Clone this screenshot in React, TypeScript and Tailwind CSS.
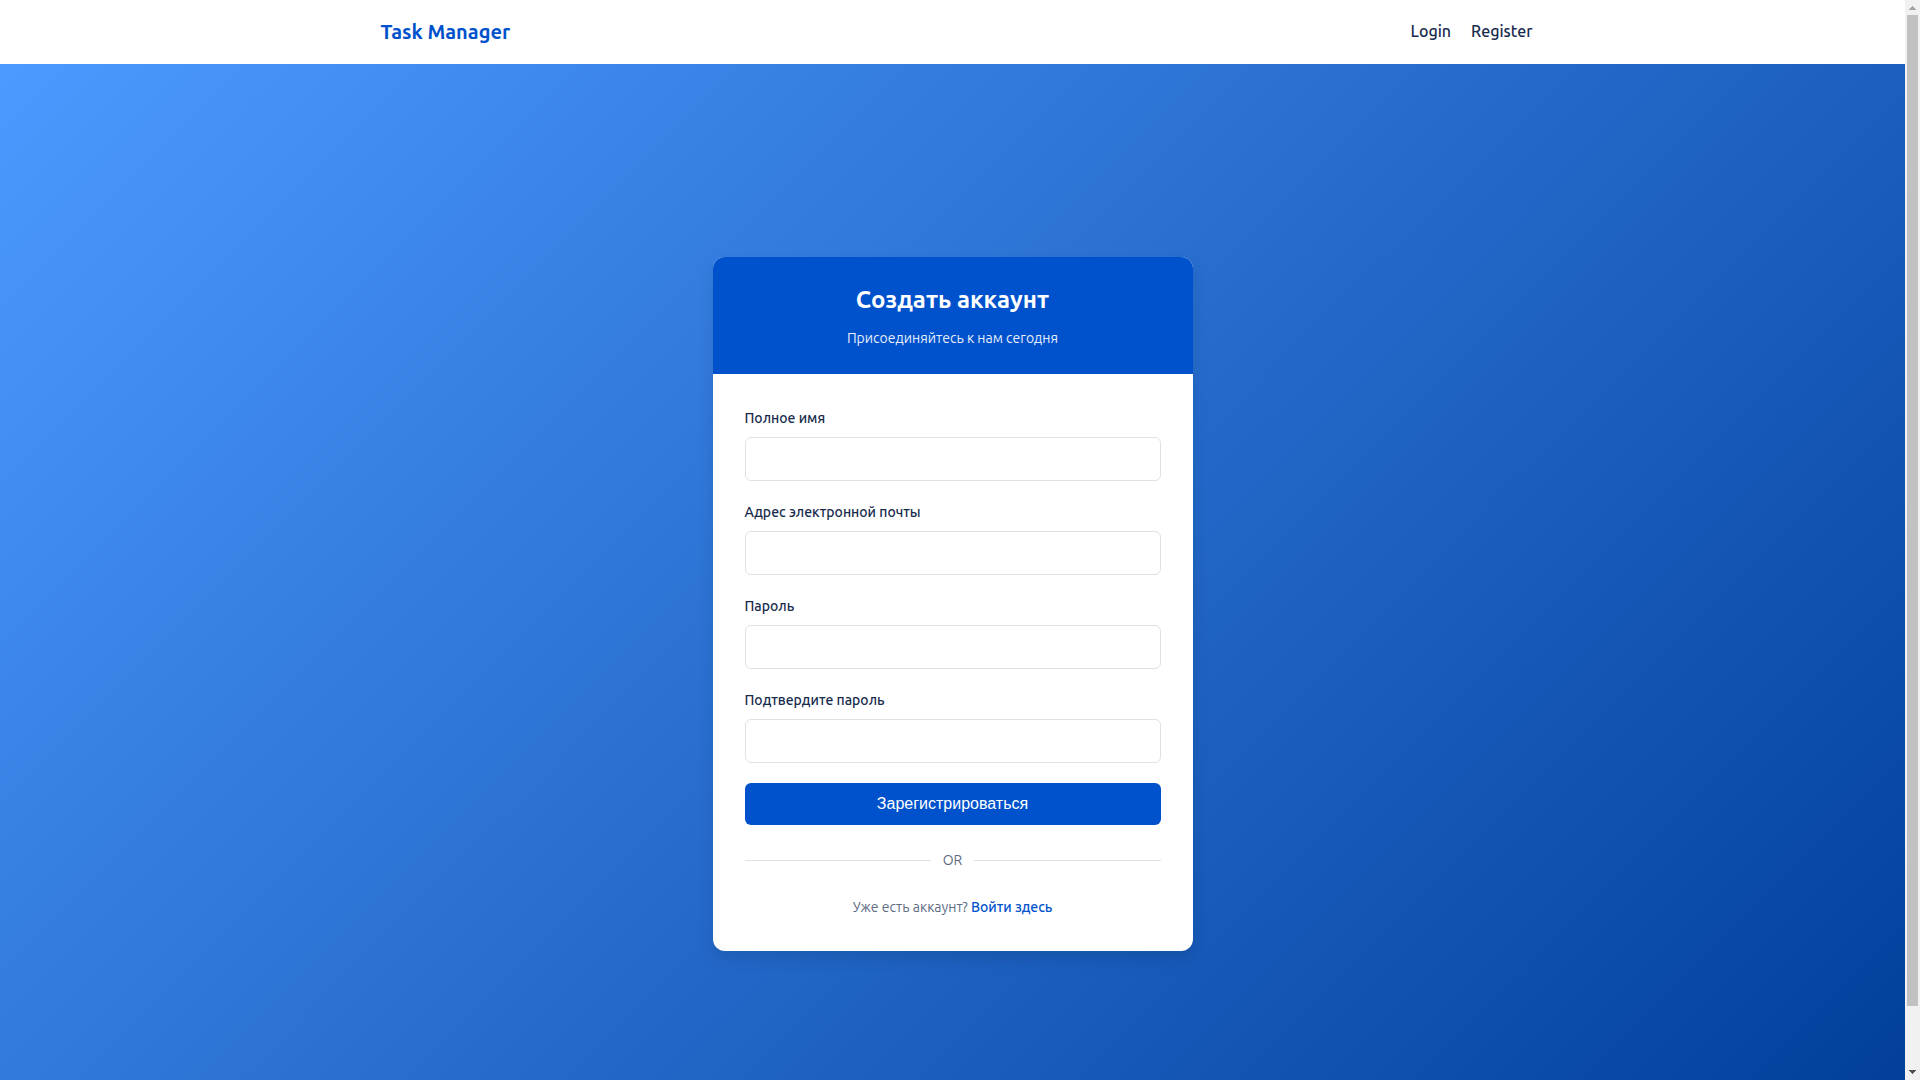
import React from "react";

const fields = [
  { id: "name", label: "Полное имя", type: "text" },
  { id: "email", label: "Адрес электронной почты", type: "email" },
  { id: "password", label: "Пароль", type: "password" },
  { id: "confirm", label: "Подтвердите пароль", type: "password" },
];

function Header() {
  return (
    <header className="h-16 shrink-0 bg-white">
      <div className="mx-auto flex h-full max-w-[1200px] items-center justify-between pr-5 pl-7">
        <a href="#" className="text-xl leading-8 font-bold text-[#0052cc]">
          Task Manager
        </a>
        <nav className="flex gap-5 pb-0.5 text-base leading-6 font-medium text-[#172b4d]">
          <a href="#login">Login</a>
          <a href="#register">Register</a>
        </nav>
      </div>
    </header>
  );
}

function RegisterCard() {
  return (
    <section className="w-full max-w-[480px] overflow-hidden rounded-xl bg-white shadow-[0_8px_16px_rgba(0,0,0,0.1)]">
      <div className="bg-[#0052cc] p-6 text-center text-white">
        <h1 className="mb-2 text-2xl leading-[38px] font-bold">Создать аккаунт</h1>
        <p className="text-sm leading-[23px] opacity-90">Присоединяйтесь к нам сегодня</p>
      </div>
      <div className="p-8">
        <form className="flex flex-col gap-5 pt-px">
          {fields.map((f) => (
            <div key={f.id} className="flex flex-col gap-2">
              <label htmlFor={f.id} className="text-sm leading-[22px] font-medium text-[#172b4d]">
                {f.label}
              </label>
              <input
                id={f.id}
                type={f.type}
                className="h-11 w-full rounded-md border border-[#dfe1e6] px-4 outline-none focus:border-[#0052cc]"
              />
            </div>
          ))}
          <button
            type="button"
            className="h-[42px] w-full rounded-md bg-[#0052cc] font-['Liberation_Sans',sans-serif] text-base text-white"
          >
            Зарегистрироваться
          </button>
        </form>
        <div className="my-6 flex items-center gap-3 text-sm leading-[23px] text-[#5e6c84]">
          <span className="h-px flex-1 bg-[#dfe1e6]" />
          OR
          <span className="h-px flex-1 bg-[#dfe1e6]" />
        </div>
        <p className="text-center text-sm leading-[23px] text-[#5e6c84]">
          Уже есть аккаунт?{" "}
          <a href="#login" className="font-medium text-[#0052cc]">
            Войти здесь
          </a>
        </p>
      </div>
    </section>
  );
}

function ScrollRail() {
  return (
    <div aria-hidden="true" className="flex w-[15px] shrink-0 flex-col items-center bg-[#f1f1f1]">
      <svg width="15" height="15" viewBox="0 0 15 15" fill="#a3a3a3" shapeRendering="crispEdges">
        <path d="M7 6h1v1h1v1h1v1h1v1H4V9h1V8h1V7h1z" />
      </svg>
      <div className="w-[11px] grow-[991] bg-[#c1c1c1]" />
      <div className="grow-[59]" />
      <svg width="15" height="15" viewBox="0 0 15 15" fill="#505050" shapeRendering="crispEdges">
        <path d="M4 5h7v1h-1v1H9v1H8v1H7V8H6V7H5V6H4z" />
      </svg>
    </div>
  );
}

export default function App() {
  return (
    <div className="flex h-screen overflow-hidden font-['Ubuntu','Noto_Sans',sans-serif]">
      <div className="flex min-w-0 flex-1 flex-col overflow-hidden">
        <Header />
        <main className="flex min-h-screen shrink-0 items-center justify-center bg-[linear-gradient(135deg,#4c9aff_0%,#003d99_100%)] p-5">
          <RegisterCard />
        </main>
      </div>
      <ScrollRail />
    </div>
  );
}
